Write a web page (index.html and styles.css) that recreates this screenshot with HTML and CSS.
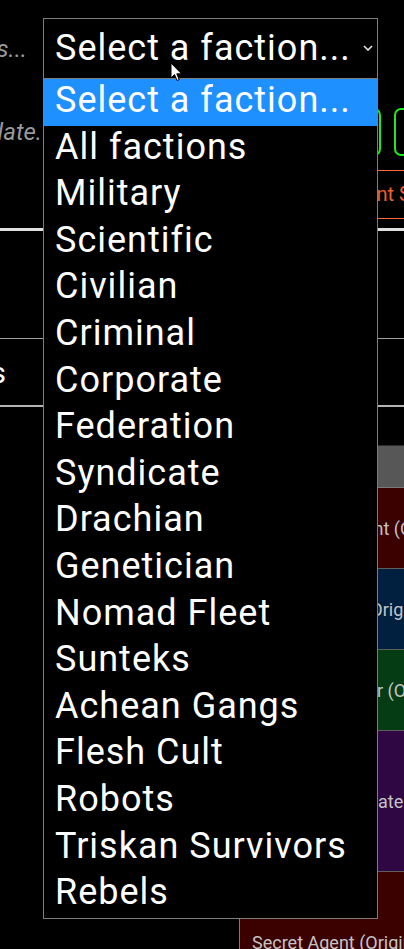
FILE: index.html
```html
<!DOCTYPE html>
<html>
<head>
	<!-- Card browser, faction filter open. -->
	<title>Card Browser</title>
	<link rel="stylesheet" href="styles.css">
</head>
<body>
	<div id="page">
		<!-- Filters: search, faction select, toggles, tags. -->
		<div class="filter-row first">
			<div class="clip"><span class="hint">Search abilities...</span></div>
			<div class="faction-select">
				<div class="select-value">Select a faction...
					<svg class="chevron" width="10" height="6" viewBox="0 0 10 6"><polyline points="1,1 5,5 9,1" fill="none" stroke="#e6e6e6" stroke-width="1.6"/></svg>
				</div>
				<ul class="select-options">
					<li class="selected">Select a faction...</li>
					<li>All factions</li>
					<li>Military</li>
					<li>Scientific</li>
					<li>Civilian</li>
					<li>Criminal</li>
					<li>Corporate</li>
					<li>Federation</li>
					<li>Syndicate</li>
					<li>Drachian</li>
					<li>Genetician</li>
					<li>Nomad Fleet</li>
					<li>Sunteks</li>
					<li>Achean Gangs</li>
					<li>Flesh Cult</li>
					<li>Robots</li>
					<li>Triskan Survivors</li>
					<li>Rebels</li>
				</ul>
			</div>
		</div>
		<div class="filter-row second">
			<div class="clip tight"><span class="hint">Search by template.</span></div>
			<div class="toggles">
				<span class="toggle"></span>
				<span class="toggle"></span>
			</div>
		</div>
		<div class="filter-row third">
			<span class="tag">Secret Agent Skills</span>
		</div>

		<div class="divider strong"></div>
		<div class="spacer"></div>
		<div class="divider thin"></div>
		<div class="section-title">
			<div class="clip title"><span>Abilities</span></div>
		</div>
		<div class="divider mid"></div>

		<!-- Result table -->
		<div class="results">
			<div class="side"></div>
			<div class="card-table">
				<div class="table-head"></div>
				<div class="table-row red">Embedded Agent (Original)</div>
				<div class="table-row blue">Double Agent (Original)</div>
				<div class="table-row green">Hidden Operator (Original)</div>
				<div class="table-row purple tall">Defector Syndicate (Original)</div>
				<div class="table-row red tall">Secret Agent (Original)</div>
			</div>
		</div>
	</div>

	<!-- mouse pointer -->
	<svg class="cursor" width="13" height="21" viewBox="0 0 13 21"><path d="M1 1 L1 16 L4.5 12.5 L7 18.5 L9.2 17.6 L6.8 11.8 L11.5 11.8 Z" fill="#fff" stroke="#000" stroke-width="1"/></svg>
</body>
</html>
```

FILE: styles.css
```css
body {
	margin: 0;
	background: #000;
	color: #fff;
	font-family: Roboto, "Noto Sans", sans-serif;
	overflow: hidden;
}

#page {
	width: 404px;
}

/* filter rows */
.filter-row {
	display: flex;
	align-items: center;
}

.first {
	padding-top: 18px;
	height: 61px;
}

.second {
	margin-top: 29px;
	height: 48px;
}

.third {
	margin-top: 14px;
}

/* left column is cut off by the window, keep the end of the text */
.clip {
	width: 43px;
	flex-shrink: 0;
	display: flex;
	justify-content: flex-end;
	overflow: hidden;
	white-space: nowrap;
}

.hint {
	font-style: italic;
	font-size: 24px;
	color: #9a9a9a;
	padding-right: 16px;
}

.tight .hint {
	padding-right: 1px;
}

/* faction select, open */
.faction-select {
	position: relative;
	width: 335px;
	height: 61px;
	box-sizing: border-box;
	border: 1px solid #7d7d7d;
	background: #000;
	z-index: 2;
}

.select-value {
	line-height: 59px;
	padding-left: 11px;
	font-size: 36px;
	letter-spacing: 1px;
	white-space: nowrap;
}

.chevron {
	position: absolute;
	right: 4px;
	top: 26px;
}

.select-options {
	position: absolute;
	top: calc(100% + 1px);
	left: -1px;
	width: 335px;
	box-sizing: border-box;
	margin: 0;
	padding: 0;
	list-style: none;
	background: #000;
	border: 1px solid #7d7d7d;
	border-top: none;
}

.select-options li {
	height: 46.6px;
	box-sizing: border-box;
	padding: 0 0 3px 11px;
	line-height: 43.6px;
	font-size: 36px;
	letter-spacing: 1px;
	white-space: nowrap;
}

.select-options .selected {
	background: #1e90ff;
}

/* toggles */
.toggles {
	display: flex;
	gap: 13px;
	margin-left: auto;
	margin-right: -40px;
	flex-shrink: 0;
}

.toggle {
	width: 50px;
	height: 48px;
	box-sizing: border-box;
	border: 2px solid #22e622;
	border-radius: 7px;
}

.tag {
	margin-left: 267px;
	flex-shrink: 0;
	height: 49px;
	box-sizing: border-box;
	padding: 0 12px;
	border: 1px solid #ff6a3a;
	line-height: 47px;
	font-size: 20px;
	color: #f0602f;
	white-space: nowrap;
}

/* dividers */
.divider.strong {
	margin-top: 9px;
	height: 3px;
	background: #e0e0e0;
}

.spacer {
	height: 107px;
}

.divider.thin {
	height: 1px;
	background: #a0a0a0;
}

.divider.mid {
	height: 2px;
	background: #b4b4b4;
}

.section-title {
	height: 66px;
	display: flex;
	align-items: center;
}

.clip.title span {
	font-size: 30px;
	padding-right: 37px;
}

/* results */
.results {
	margin-top: 38px;
	display: grid;
	grid-template-columns: 239px 1fr;
}

.card-table {
	border-left: 1px solid #7a7a7a;
	border-top: 1px solid #2c2c2c;
}

.table-head {
	height: 41px;
	background: #575757;
	border-bottom: 1px solid #7a7a7a;
}

.table-row {
	height: 80px;
	display: flex;
	align-items: center;
	padding-left: 12px;
	border-bottom: 1px solid #5e5e5e;
	font-size: 18px;
	color: #c4c4c4;
	white-space: nowrap;
}

.table-row.tall {
	height: 140px;
}

.red {
	background: #3b0000;
}

.blue {
	background: #01203f;
}

.green {
	background: #063c13;
}

.purple {
	background: #2e0743;
}

.cursor {
	position: absolute;
	left: 170px;
	top: 62px;
	z-index: 3;
}
```
